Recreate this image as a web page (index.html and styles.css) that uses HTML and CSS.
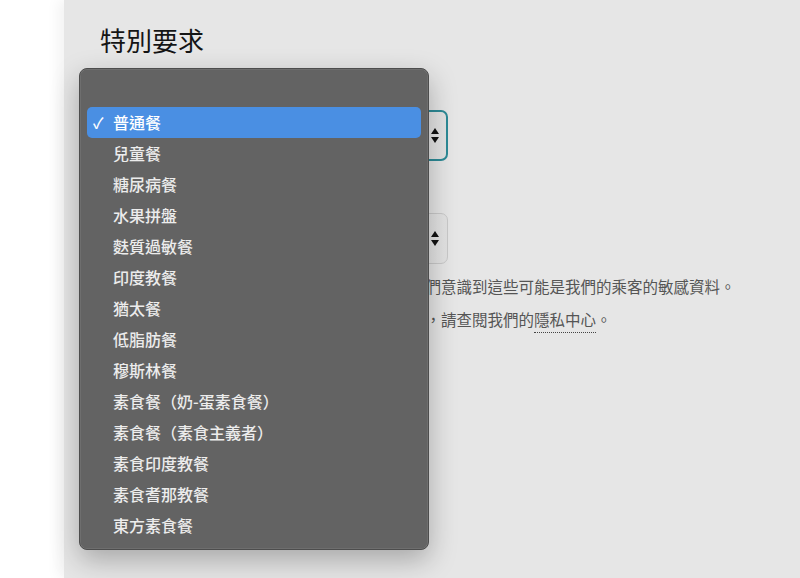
FILE: index.html
```html
<!DOCTYPE html>
<html lang="zh-Hant">
<head>
    <meta charset="UTF-8">
    <meta name="viewport" content="width=device-width, initial-scale=1.0">
    <title>特別要求</title>
    <link rel="stylesheet" href="styles.css">
</head>
<body>
    <div class="page">
        <div class="gutter"></div>
        <div class="main">
            <h2 class="title">特別要求</h2>

            <div class="field">
                <label class="field-label">餐點要求</label>
                <div class="select select-focus">
                    <span class="select-value">普通餐</span>
                    <svg class="select-arrows" width="8" height="15" viewBox="0 0 8 15">
                        <polygon points="0,6 4,0 8,6" fill="#111"/>
                        <polygon points="0,9 8,9 4,15" fill="#111"/>
                    </svg>
                </div>
            </div>

            <div class="field">
                <label class="field-label">特殊協助</label>
                <div class="select">
                    <span class="select-value">無</span>
                    <svg class="select-arrows" width="8" height="15" viewBox="0 0 8 15">
                        <polygon points="0,6 4,0 8,6" fill="#111"/>
                        <polygon points="0,9 8,9 4,15" fill="#111"/>
                    </svg>
                </div>
            </div>

            <p class="note">我們僅會使用這些資料來滿足您的特別要求，我們意識到這些可能是我們的乘客的敏感資料。</p>
            <p class="note note-second">如欲了解我們如何處理及保護您的個人資料詳情，請查閱我們的<a class="note-link" href="#">隱私中心</a>。</p>

            <ul class="menu">
                <li class="menu-item"></li>
                <li class="menu-item selected"><span class="check">✓</span>普通餐</li>
                <li class="menu-item">兒童餐</li>
                <li class="menu-item">糖尿病餐</li>
                <li class="menu-item">水果拼盤</li>
                <li class="menu-item">麩質過敏餐</li>
                <li class="menu-item">印度教餐</li>
                <li class="menu-item">猶太餐</li>
                <li class="menu-item">低脂肪餐</li>
                <li class="menu-item">穆斯林餐</li>
                <li class="menu-item">素食餐（奶-蛋素食餐）</li>
                <li class="menu-item">素食餐（素食主義者）</li>
                <li class="menu-item">素食印度教餐</li>
                <li class="menu-item">素食耆那教餐</li>
                <li class="menu-item">東方素食餐</li>
            </ul>
        </div>
    </div>
</body>
</html>
```

FILE: styles.css
```css
body {
    margin: 0;
    font-family: "Noto Sans CJK TC", "Noto Sans", sans-serif;
    background-color: #fff;
    color: #111;
}
.page {
    display: flex;
    height: 578px;
    overflow: hidden;
}
.gutter {
    width: 64px;
    flex-shrink: 0;
    background-color: #fff;
}
.main {
    position: relative;
    flex: 1;
    background-color: #e6e6e6;
    padding: 26px 36px 0;
    box-shadow: -6px 0 12px rgba(0,0,0,0.05);
}
.title {
    margin: 0;
    font-size: 26px;
    line-height: 28px;
    font-weight: 400;
    color: #151515;
}
.field {
    margin-top: 22px;
    width: 348px;
}
.field:first-of-type {
    margin-top: 26px;
}
.field-label {
    display: block;
    font-size: 15px;
    line-height: 22px;
    margin-bottom: 8px;
    color: #333;
}
.select {
    display: flex;
    align-items: center;
    justify-content: space-between;
    box-sizing: border-box;
    height: 51px;
    padding: 0 8px 0 14px;
    border: 1px solid #c9c9c9;
    border-radius: 7px;
    background: linear-gradient(to right, #ececec 80%, #e2e2e2);
    font-size: 15px;
}
.select-focus {
    border: 2px solid #2d8a96;
    padding-right: 7px;
}
.note {
    margin: 10px 0 0;
    font-size: 15.5px;
    line-height: 24px;
    color: #555;
    white-space: nowrap;
}
.note-second {
    margin-top: 9px;
}
.note-link {
    color: #555;
    text-decoration: none;
    border-bottom: 1px dotted #444;
    padding-bottom: 2px;
}
.menu {
    position: absolute;
    left: 15px;
    top: 68px;
    width: 350px;
    height: 482px;
    box-sizing: border-box;
    margin: 0;
    padding: 7px 7px 0;
    list-style: none;
    background-color: #636363;
    border: 1px solid #4d4d4d;
    border-radius: 8px;
    box-shadow: 0 10px 28px rgba(0,0,0,0.28), 0 0 0 0.5px rgba(255,255,255,0.15) inset;
}
.menu-item {
    position: relative;
    height: 31px;
    line-height: 31px;
    padding-left: 26px;
    border-radius: 5px;
    font-size: 16px;
    font-weight: 500;
    color: #ececec;
}
.menu-item.selected {
    background-color: #4a8fe3;
    color: #fff;
}
.check {
    position: absolute;
    left: 6px;
    font-size: 15px;
}
```
